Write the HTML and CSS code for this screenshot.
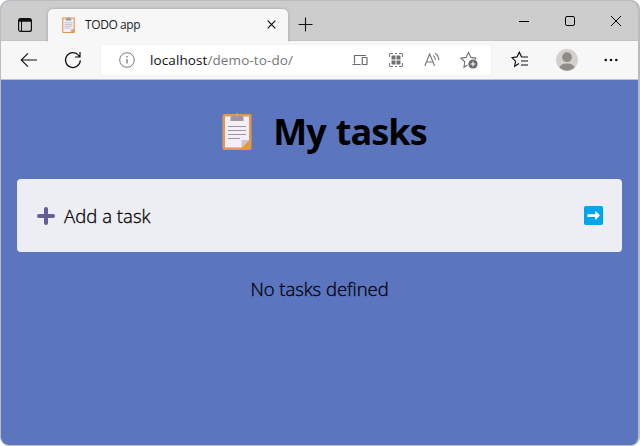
FILE: index.html
```
<!DOCTYPE html>
<html lang="en">
<head>
<meta charset="utf-8">
<title>TODO app</title>
<link rel="stylesheet" href="styles.css">
</head>
<body>
<div class="window">
  <header class="titlebar">
    <svg class="workspace" width="16" height="16" viewBox="0 0 16 16" fill="none" stroke="#111"><rect x="1.6" y="1.6" width="12.8" height="12.8" rx="2" stroke-width="1.2"/><path d="M2 3.2h12" stroke-width="3"/><path d="M4.5 4v10" stroke-width="1"/></svg>
    <div class="tab">
      <svg class="favicon" viewBox="0 0 30 37"><use href="#clipboard"/></svg>
      <span class="tab-title">TODO app</span>
      <svg class="tab-close" width="9" height="9" viewBox="0 0 9 9" stroke="#111" stroke-width="1.2"><path d="M.7.7l7.6 7.6M8.3.7L.7 8.3"/></svg>
    </div>
    <svg class="new-tab" width="15" height="15" viewBox="0 0 15 15" stroke="#111" stroke-width="1.1"><path d="M7.5 .5v14M.5 7.5h14"/></svg>
    <div class="controls">
      <svg width="12" height="12" viewBox="0 0 12 12" stroke="#000"><path d="M1 6.5h10"/></svg>
      <svg width="12" height="12" viewBox="0 0 12 12" fill="none" stroke="#000"><rect x="1.5" y="1.5" width="9" height="9" rx="1.5"/></svg>
      <svg width="12" height="12" viewBox="0 0 12 12" stroke="#000"><path d="M1 1l10 10M11 1L1 11"/></svg>
    </div>
  </header>
  <nav class="toolbar">
    <svg class="back" width="18" height="16" viewBox="0 0 18 16" fill="none" stroke="#111" stroke-width="1.1"><path d="M17 8H1.2M8 1.3L1.2 8 8 14.7"/></svg>
    <svg class="reload" width="18" height="18" viewBox="0 0 18 18" fill="none" stroke="#111" stroke-width="1.2"><path d="M16.3 9.2A7.4 7.4 0 1 1 14.7 4.5L16 6M16 1v5h-5"/></svg>
    <div class="address">
      <svg width="16" height="16" viewBox="0 0 16 16" fill="none" stroke="#777"><circle cx="8" cy="8" r="7.3"/><path d="M8 7v4.6M8 4v1.4" stroke-width="1.3"/></svg>
      <span class="url">localhost<span class="path">/demo-to-do/</span></span>
      <div class="address-icons">
        <svg width="16" height="16" viewBox="0 0 16 16" fill="none" stroke="#6b6b6b" stroke-width="1.2"><path d="M2.500 11.500V3.500H14M.5 12.500h8.200"/><rect x="10.300" y="5.500" width="4.700" height="7" rx=".6"/></svg>
        <svg width="16" height="16" viewBox="0 0 16 16" fill="none" stroke="#777"><path d="M1.500 5V1.500H5M7 1.500h2M11 1.500h3.500V5M14.500 11v3.500H11M9 14.500H7M5 14.500H1.500V11"/><path d="M3.500 3.500h4v4h-4zM8.500 3.500h4v4h-4zM3.500 8.500h4v4h-4zM8.500 8.500h4v4h-4z" fill="#707070" stroke="none"/></svg>
        <svg width="16" height="16" viewBox="0 0 16 16" fill="none" stroke="#777" stroke-width="1.1"><path d="M.8 14L5.700 2l4.900 12M2.500 10h6.400M9.300 3.500a5 5 0 0 1 2 4.500M11 1.300a8 8 0 0 1 3.800 6.900"/></svg>
        <svg class="star-add" width="18" height="18" viewBox="0 0 18 18" fill="none" stroke="#707070" stroke-width="1.1"><path d="M7.500 14L4 16.300l.7-5.500L1 7.200l5-.8L8.500 1.500l2.400 4.900 5 .8-1 1.300"/><circle cx="13" cy="13" r="4.600" fill="#686868" stroke="none"/><path d="M13 10.500v5M10.500 13h5" stroke="#fff"/></svg>
      </div>
    </div>
    <div class="browser-icons">
      <svg width="18" height="18" viewBox="0 0 18 18" fill="none" stroke="#111" stroke-width="1.2"><path d="M8 12.500l-4.300 2.800.8-5.100L1 6.700l5-.8L8.300 1.200l2.300 4.700M10.600 6H17M10 10h7M10 14h7"/></svg>
      <svg width="22" height="22" viewBox="0 0 22 22"><circle cx="11" cy="11" r="11" fill="#d3d1ce"/><circle cx="11" cy="8.200" r="4.900" fill="#918c88"/><path d="M3.400 18.600C4.400 13 17.600 13 18.600 18.600a11 11 0 0 1-15.200 0" fill="#918c88"/></svg>
      <svg width="14" height="4" viewBox="0 0 14 4" fill="#111"><circle cx="1.700" cy="2" r="1.300"/><circle cx="7" cy="2" r="1.300"/><circle cx="12.300" cy="2" r="1.300"/></svg>
    </div>
  </nav>
  <main class="page">
    <h1 class="heading">
      <svg class="clipboard" width="30" height="37" viewBox="0 0 30 37"><g id="clipboard"><rect x=".5" y="1" width="29" height="36" rx="1.500" fill="#e39748"/><path d="M3 3.500h24v23.500l-7.500 7.500H3z" fill="#f3eef8"/><path d="M27 27l-7.500 7.500V27z" fill="#cdc4d9"/><path d="M8.500 8V4.500Q8.500 3 10 3h2.500a2.500 2.500 0 0 1 5 0H20q1.500 0 1.500 1.500V8z" fill="#9a9994"/><circle cx="15" cy="2" r="1.800" fill="#d5a475"/><path d="M6 13.500h18M6 17.500h18M6 21.500h18M6 25.500h12" stroke="#9997a0" stroke-width="1.200"/></g></svg>
      <span>My tasks</span>
    </h1>
    <section class="add-card">
      <svg width="18" height="18" viewBox="0 0 18 18" stroke="#655c9a" stroke-width="4" stroke-linecap="round"><path d="M9 2v14M2 9h14"/></svg>
      <span class="add-label">Add a task</span>
      <svg class="submit" width="19" height="19" viewBox="0 0 19 19"><rect width="19" height="19" rx="1.800" fill="#00a6ed"/><path d="M3.500 8.200h7.700V5.800q0-1 .8-.4l3.400 3.400q.5.600 0 1.200L12 13.500q-.8.600-.8-.4v-2.200H3.500z" fill="#fff"/></svg>
    </section>
    <p class="empty">No tasks defined</p>
  </main>
</div>
</body>
</html>
```
FILE: styles.css
```
* { box-sizing: border-box; }
body { margin: 0; background: #fff; font-family: "Open Sans", "Noto Sans", sans-serif; }
svg { display: block; flex: none; }
.window { width: 640px; height: 446px; display: flex; flex-direction: column; overflow: hidden; border: solid #bcbcbc; border-width: 1px 2px 1px 1px; border-radius: 9px; background: #5c75bf; }
.titlebar { height: 40px; display: flex; flex: none; background: #cdcdcd; border-bottom: 1px solid #c4c4c4; }
.workspace { margin: 16px 0 0 16px; }
.tab { width: 240px; height: 33px; margin: 8px 0 0 15px; padding: 0 12px 2px 14px; display: flex; align-items: center; background: #f7f7f7; border-radius: 5px 5px 0 0; box-shadow: 0 0 3px #999; clip-path: inset(-3px -3px 0); }
.favicon { width: 13px; height: 16px; }
.tab-title { margin-left: 10px; font-size: 12px; letter-spacing: -.4px; color: #222; }
.tab-close { margin-left: auto; }
.new-tab { margin: 16px 0 0 10px; }
.controls { display: flex; gap: 34px; margin: 14px 16px 0 auto; }
.toolbar { height: 39px; flex: none; display: flex; align-items: center; background: #f7f7f7; border-bottom: 1px solid #bfc2ca; }
.back { margin-left: 19px; }
.reload { margin-left: 26px; }
.address { width: 390px; height: 30px; margin-left: 19px; padding: 0 13px 0 18px; display: flex; align-items: center; background: #fff; border-radius: 4px; box-shadow: 0 0 3px #eee; }
.url { margin-left: 15px; font-size: 13.500px; letter-spacing: .1px; color: #111; white-space: nowrap; }
.path { color: #777; }
.address-icons { margin-left: auto; display: flex; align-items: center; gap: 20px; }
.browser-icons { flex: 1; margin: 0 20px 0 20px; display: flex; align-items: center; justify-content: space-between; }
.page { flex: 1; padding: 0 16px; color: #000; }
.heading { height: 99px; margin: 0; padding: 4px 0 0 10px; display: flex; align-items: center; justify-content: center; gap: 21px; font-size: 36px; font-weight: 700; letter-spacing: -.9px; word-spacing: 1.500px; }
.add-card { height: 73px; padding: 0 19px 0 20px; display: flex; align-items: center; background: #edeef3; border-radius: 4px; }
.add-label, .empty { font-size: 18.500px; font-weight: 300; -webkit-text-stroke: .3px #000; }
.add-label { margin-left: 9px; letter-spacing: .05px; }
.submit { margin-left: auto; }
.empty { margin: 23px 0 0; line-height: 27px; text-align: center; letter-spacing: -.05px; }
```
